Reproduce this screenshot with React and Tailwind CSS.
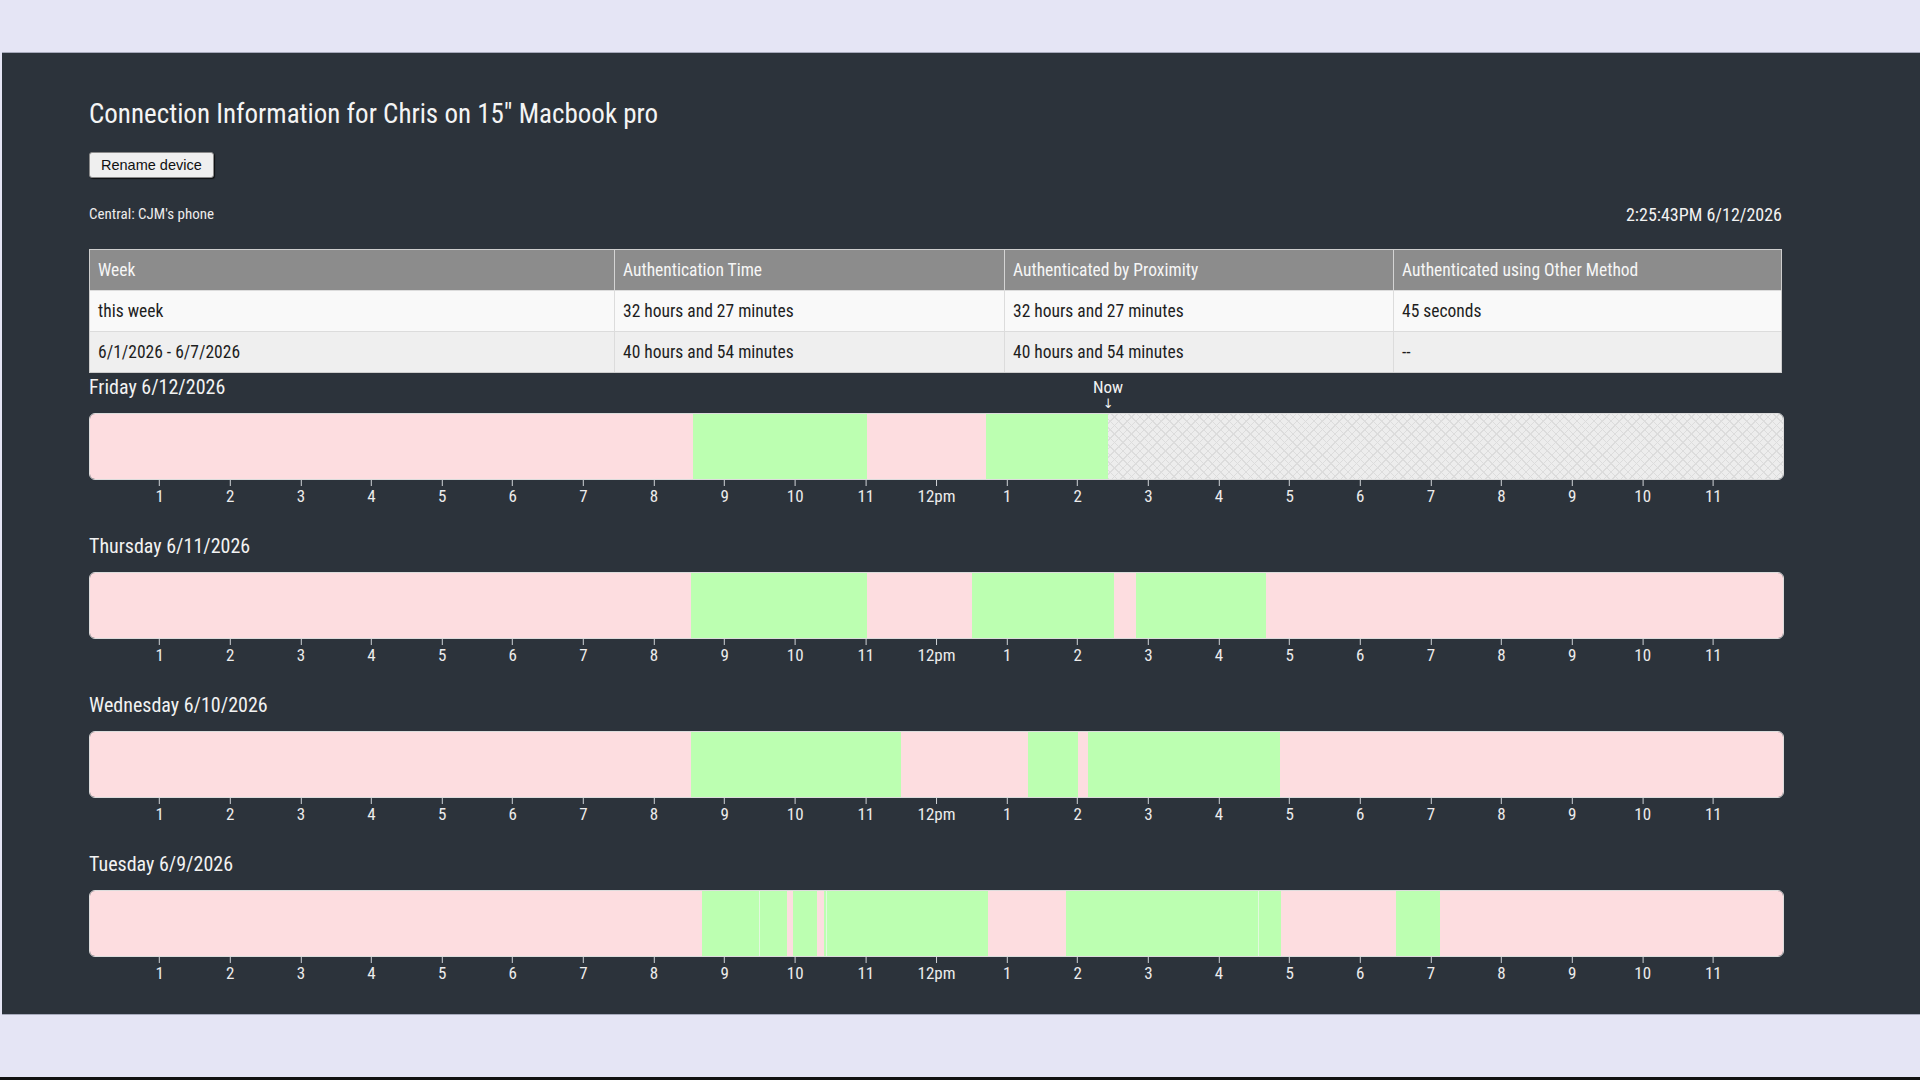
const HOURS = [
  "1", "2", "3", "4", "5", "6", "7", "8", "9", "10", "11", "12pm",
  "1", "2", "3", "4", "5", "6", "7", "8", "9", "10", "11",
];

const DAYS = [
  {
    label: "Friday 6/12/2026",
    now: 14.43,
    segs: [
      [0, 8.55, "p"],
      [8.55, 11.02, "g"],
      [11.02, 12.7, "p"],
      [12.7, 14.43, "g"],
      [14.43, 24, "x"],
    ],
  },
  {
    label: "Thursday 6/11/2026",
    segs: [
      [0, 8.52, "p"],
      [8.52, 11.02, "g"],
      [11.02, 12.51, "p"],
      [12.51, 14.51, "g"],
      [14.51, 14.83, "p"],
      [14.83, 16.67, "g"],
      [16.67, 24, "p"],
    ],
  },
  {
    label: "Wednesday 6/10/2026",
    segs: [
      [0, 8.52, "p"],
      [8.52, 11.5, "g"],
      [11.5, 13.3, "p"],
      [13.3, 14.01, "g"],
      [14.01, 14.15, "p"],
      [14.15, 16.87, "g"],
      [16.87, 24, "p"],
    ],
  },
  {
    label: "Tuesday 6/9/2026",
    segs: [
      [0, 8.67, "p"],
      [8.67, 9.48, "g"],
      [9.48, 9.88, "s"],
      [9.88, 9.97, "p"],
      [9.97, 10.3, "g"],
      [10.3, 10.41, "p"],
      [10.41, 10.44, "g"],
      [10.44, 12.73, "s"],
      [12.73, 13.84, "p"],
      [13.84, 16.56, "g"],
      [16.56, 16.88, "s"],
      [16.88, 18.52, "p"],
      [18.52, 19.14, "g"],
      [19.14, 24, "p"],
    ],
  },
];

function Segment({ from, to, kind }) {
  const width = { width: `${((to - from) / 24) * 100}%` };
  if (kind === "p") return <div className="h-full bg-[#fddde0]" style={width} />;
  if (kind === "g") return <div className="h-full bg-[#bcffb1]" style={width} />;
  if (kind === "s")
    return <div className="h-full bg-[#bcffb1] border-l-[1.5px] border-[#e2f8de]" style={width} />;
  return (
    <div
      className="h-full bg-[#ededed] bg-[repeating-linear-gradient(45deg,#dcdcdc_0px,#dcdcdc_1px,transparent_1px,transparent_6px),repeating-linear-gradient(-45deg,#dcdcdc_0px,#dcdcdc_1px,transparent_1px,transparent_6px)]"
      style={width}
    />
  );
}

function Day({ day, first }) {
  return (
    <div className={first ? "mt-[1px]" : ""}>
      <div className="h-[26px] leading-[26px] text-[20px] text-[#f2f2f2]">{day.label}</div>
      <div className="relative mt-[13px] h-[67px]">
        {day.now !== undefined && (
          <div
            className="absolute bottom-full mb-[3px] -translate-x-1/2 flex flex-col items-center text-[#f2f2f2]"
            style={{ left: `${(day.now / 24) * 100}%` }}
          >
            <span className="text-[17px] leading-[18px]">Now</span>
            <span className="mt-[1px] text-[13px] leading-[13px] font-['DejaVu_Sans',sans-serif] font-stretch-normal">↓</span>
          </div>
        )}
        <div className="flex h-full w-full overflow-hidden rounded-[6px] border border-[#dcdcdc]">
          {day.segs.map(([a, b, k], i) => (
            <Segment key={i} from={a} to={b} kind={k} />
          ))}
        </div>
      </div>
      <div className="relative h-[53px]">
        {HOURS.map((h, i) => (
          <div
            key={i}
            className="absolute top-0 -translate-x-1/2 flex flex-col items-center"
            style={{ left: `${((i + 1) / 24) * 100}%` }}
          >
            <div className="h-[6px] w-px bg-[#cfd2d6]" />
            <div className="text-[17px] leading-[20px] text-[#ececec]">{h}</div>
          </div>
        ))}
      </div>
    </div>
  );
}

const ROWS = [
  ["this week", "32 hours and 27 minutes", "32 hours and 27 minutes", "45 seconds"],
  ["6/1/2026 - 6/7/2026", "40 hours and 54 minutes", "40 hours and 54 minutes", "--"],
];

export default function App() {
  return (
    <div className="w-[1920px] h-[1080px] overflow-hidden bg-[#e5e5f5] flex flex-col font-['Roboto',sans-serif] font-stretch-[75%]">
      <div className="h-[52px] shrink-0" />
      <div className="ml-[2px] h-[963px] shrink-0 bg-[#2c333b] border-y border-[#a7aabb] pl-[87px] pr-[136px] pt-[45px]">
        <h1 className="text-[27px] leading-[32px] text-[#f4f4f4]">
          Connection Information for Chris on 15&quot; Macbook pro
        </h1>
        <button className="mt-[22px] h-[26px] px-[11px] bg-[#efefef] border border-[#8a8a8a] rounded-[3px] shadow-[1px_1px_1px_rgba(0,0,0,0.7)] font-['Liberation_Sans',Arial,sans-serif] font-stretch-normal text-[14.5px] leading-[24px] text-[#111]">
          Rename device
        </button>
        <div className="mt-[26px] w-[1693px] flex justify-between items-center h-[20px]">
          <span className="text-[15px] text-[#ececec]">Central: CJM&apos;s phone</span>
          <span className="text-[18px] text-[#f2f2f2]">2:25:43PM 6/12/2026</span>
        </div>
        <div className="mt-[25px] w-[1693px] border border-[#cdcdcd] text-[17.5px]">
          <div className="grid grid-cols-[524px_390px_389px_1fr] h-[40px] bg-[#8c8c8c] text-[#f6f6f6]">
            {["Week", "Authentication Time", "Authenticated by Proximity", "Authenticated using Other Method"].map((t, i) => (
              <div key={t} className={`flex items-center pl-[8px] ${i > 0 ? "border-l border-[#d4d4d4]" : ""}`}>
                {t}
              </div>
            ))}
          </div>
          {ROWS.map((r, ri) => (
            <div
              key={ri}
              className={`grid grid-cols-[524px_390px_389px_1fr] h-[41px] text-[#1e1e1e] border-t border-[#dcdcdc] ${ri === 0 ? "bg-[#f9f9f9]" : "bg-[#efefef]"}`}
            >
              {r.map((c, i) => (
                <div key={i} className={`flex items-center pl-[8px] ${i > 0 ? "border-l border-[#dcdcdc]" : ""}`}>
                  {c}
                </div>
              ))}
            </div>
          ))}
        </div>
        <div className="w-[1695px]">
          {DAYS.map((d, i) => (
            <Day key={d.label} day={d} first={i === 0} />
          ))}
        </div>
      </div>
      <div className="flex-1" />
      <div className="h-[3px] shrink-0 bg-[#111]" />
    </div>
  );
}
